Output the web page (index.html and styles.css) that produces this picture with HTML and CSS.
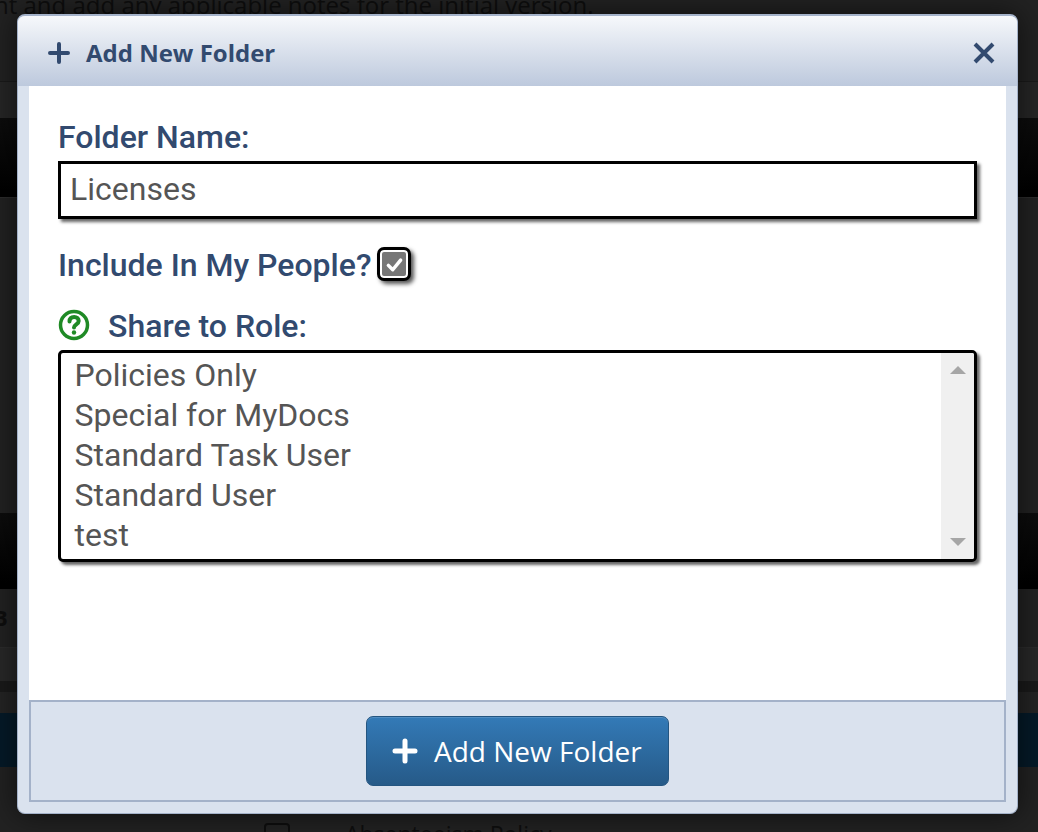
FILE: index.html
```html
<!DOCTYPE html>
<html lang="en">
<head>
    <meta charset="UTF-8">
    <meta name="viewport" content="width=device-width, initial-scale=1.0">
    <title>Add New Folder</title>
    <link rel="stylesheet" href="styles.css">
</head>
<body>
<div class="page">
    <p class="page-intro">nt and add any applicable notes for the initial version.</p>
    <div class="band band-toolbar"></div>
    <div class="band band-head"></div>
    <div class="band band-rows"></div>
    <div class="band band-head band-head-low"></div>
    <div class="band band-letter">B</div>
    <div class="band band-filter"></div>
    <div class="band band-gap"></div>
    <div class="band band-selected"></div>
    <div class="page-row">
        <span class="page-check"></span>
        <span class="page-doc">Absenteeism Policy</span>
    </div>
</div>

<div class="modal">
    <div class="modal-header">
        <svg class="modal-plus" viewBox="0 0 22 22"><path d="M11 2v18M2 11h18"/></svg>
        <h1>Add New Folder</h1>
        <svg class="modal-close" viewBox="0 0 22 22"><path d="M2 2l18 18M20 2L2 20"/></svg>
    </div>
    <div class="modal-body">
        <form class="modal-form">
            <div class="form-group name-group">
                <label for="folderName">Folder Name:</label>
                <input type="text" id="folderName" value="Licenses">
            </div>
            <div class="form-group check-group">
                <label>Include In My People?</label>
                <span class="check-box">
                    <svg viewBox="0 0 24 24"><path d="M5 13l5 5 9-11"/></svg>
                </span>
            </div>
            <div class="form-group">
                <div class="help-label">
                    <svg class="help-icon" viewBox="0 0 32 32">
                        <circle cx="16" cy="16" r="13.5"/>
                        <path class="help-mark" d="M11.500 12.500c0-3 2-4.500 4.700-4.500 2.600 0 4.500 1.500 4.500 3.900 0 3.300-4.700 3.400-4.700 6.600"/>
                        <circle class="help-dot" cx="16" cy="23.500" r="2.200"/>
                    </svg>
                    <label>Share to Role:</label>
                </div>
                <div class="role-list">
                    <ul>
                        <li>Policies Only</li>
                        <li>Special for MyDocs</li>
                        <li>Standard Task User</li>
                        <li>Standard User</li>
                        <li>test</li>
                    </ul>
                    <div class="role-scroll">
                        <span class="arrow-up"></span>
                        <span class="arrow-down"></span>
                    </div>
                </div>
            </div>
        </form>
        <div class="modal-footer">
            <button type="button" class="add-button">
                <svg viewBox="0 0 26 26"><path d="M13 3v20M3 13h20"/></svg>
                Add New Folder
            </button>
        </div>
    </div>
</div>
</body>
</html>
```

FILE: styles.css
```css
* {
    box-sizing: border-box;
}

html, body {
    margin: 0;
    height: 100%;
    overflow: hidden;
}

body {
    background-color: #222;
    font-family: "Roboto", sans-serif;
}

.page {
    height: 832px;
    overflow: hidden;
    font-family: "Open Sans", sans-serif;
    color: #0e0e0e;
}

.page-intro {
    margin: -12px 0 0 -6px;
    height: 94px;
    font-size: 24px;
    line-height: 33px;
    white-space: nowrap;
    border-bottom: 1px solid #1a1a1a;
}

.band-toolbar {
    height: 36px;
    background-color: #262626;
}

.band-head {
    height: 79px;
    background: linear-gradient(#0d0d0d, #000);
}

.band-rows {
    height: 316px;
    background-color: #222;
    border-top: 1px solid #2c2c2c;
}

.band-head-low {
    height: 76px;
}

.band-letter {
    height: 58px;
    padding-top: 12px;
    margin-left: -7px;
    font-size: 22px;
    font-weight: 700;
    line-height: 33px;
    background-color: #222;
}

.band-filter {
    height: 34px;
    background-color: #282828;
    border-top: 1px solid #2c2c2c;
}

.band-gap {
    height: 32px;
    background: linear-gradient(#1a1a1a 0, #1a1a1a 11px, #242424 11px);
}

.band-selected {
    height: 54px;
    background-color: #051a28;
}

.page-row {
    display: flex;
    align-items: flex-start;
    padding: 56px 0 0 264px;
    height: 80px;
    background-color: #222;
    gap: 55px;
}

.page-check {
    width: 26px;
    height: 26px;
    border: 2px solid #0e0e0e;
    border-radius: 4px;
}

.page-doc {
    margin-top: -5px;
    font-size: 23px;
    line-height: 33px;
}

.modal {
    position: absolute;
    left: 17px;
    top: 14px;
    width: 1001px;
    height: 800px;
    display: flex;
    flex-direction: column;
    background-color: #dae2ee;
    border: 1px solid #a4b2c9;
    border-top-width: 2px;
    border-radius: 8px;
    box-shadow: 0 0 30px rgba(0, 0, 0, 0.6);
    overflow: hidden;
}

.modal-header {
    display: flex;
    align-items: center;
    height: 70px;
    flex-shrink: 0;
    padding: 3px 22px 0 30px;
    background: linear-gradient(#f6f8fb, #bdc9dd);
    color: #324a6f;
}

.modal-plus {
    width: 22px;
    height: 22px;
    margin-right: 16px;
    fill: none;
    stroke: #324a6f;
    stroke-width: 4;
    stroke-linecap: round;
}

.modal-header h1 {
    flex: 1;
    margin: 0;
    font-family: "Open Sans", sans-serif;
    font-size: 24px;
    font-weight: 700;
}

.modal-close {
    width: 22px;
    height: 22px;
    fill: none;
    stroke: #324a6f;
    stroke-width: 4;
}

.modal-body {
    flex: 1;
    display: flex;
    flex-direction: column;
    margin: 0 11px;
}

.modal-form {
    flex: 1;
    padding: 34px 29px 0;
    background-color: white;
}

.form-group {
    margin-bottom: 27px;
}

label {
    display: block;
    font-size: 32px;
    font-weight: 500;
    line-height: 34px;
    color: #324a6f;
}

input[type="text"] {
    display: block;
    width: 100%;
    height: 58px;
    margin-top: 7px;
    padding: 0 9px 2px;
    border: 3px solid black;
    background-color: white;
    box-shadow: 3px 3px 3px #666;
    font-family: "Roboto", sans-serif;
    font-size: 32px;
    color: #555;
    outline: none;
}

.name-group {
    margin-bottom: 28px;
}

.check-group {
    display: flex;
    align-items: center;
    gap: 6px;
}

.check-group label, .help-label label {
    margin-top: 2px;
    line-height: 32px;
}

.check-box {
    display: flex;
    align-items: center;
    justify-content: center;
    width: 34px;
    height: 34px;
    border: 3px solid black;
    border-radius: 7px;
    background-color: #777;
    box-shadow: inset 0 0 0 2px white, 3px 3px 4px #555;
}

.check-box svg {
    width: 21px;
    height: 21px;
    fill: none;
    stroke: white;
    stroke-width: 4;
    stroke-linecap: round;
    stroke-linejoin: round;
}

.help-label {
    display: flex;
    align-items: center;
    gap: 18px;
}

.help-icon {
    width: 32px;
    height: 32px;
    fill: none;
    stroke: #1f8a25;
    stroke-width: 3.5;
    stroke-linecap: round;
}

.help-mark {
    stroke-width: 4;
}

.help-dot {
    fill: #1f8a25;
    stroke: none;
}

.role-list {
    display: flex;
    height: 212px;
    margin-top: 8px;
    border: 3px solid black;
    border-radius: 5px;
    background-color: white;
    box-shadow: 3px 3px 3px #666;
    overflow: hidden;
}

.role-list ul {
    flex: 1;
    margin: 0;
    padding: 2px 0 0 13.500px;
    list-style: none;
    font-size: 32px;
    line-height: 40px;
    color: #555;
}

.role-scroll {
    display: flex;
    flex-direction: column;
    justify-content: space-between;
    align-items: center;
    width: 33px;
    padding: 13px 0;
    background-color: #f0f0f0;
}

.arrow-up {
    border-left: 8px solid transparent;
    border-right: 8px solid transparent;
    border-bottom: 8px solid #a6a6a6;
}

.arrow-down {
    border-left: 8px solid transparent;
    border-right: 8px solid transparent;
    border-top: 8px solid #a6a6a6;
}

.modal-footer {
    display: flex;
    justify-content: center;
    align-items: center;
    height: 102px;
    flex-shrink: 0;
    margin-bottom: 11px;
    background-color: #dae2ee;
    border: 2px solid #a4b2c9;
}

.add-button {
    display: flex;
    align-items: center;
    gap: 16px;
    width: 303px;
    height: 70px;
    padding: 0 0 0 25px;
    background: linear-gradient(#337ab7, #265a88);
    border: 1px solid #245580;
    border-radius: 7px;
    box-shadow: inset 0 1px 0 rgba(255, 255, 255, 0.15);
    color: white;
    font-family: "Open Sans", sans-serif;
    font-size: 28px;
    cursor: pointer;
}

.add-button svg {
    width: 26px;
    height: 26px;
    fill: none;
    stroke: white;
    stroke-width: 5;
    stroke-linecap: round;
}
```
